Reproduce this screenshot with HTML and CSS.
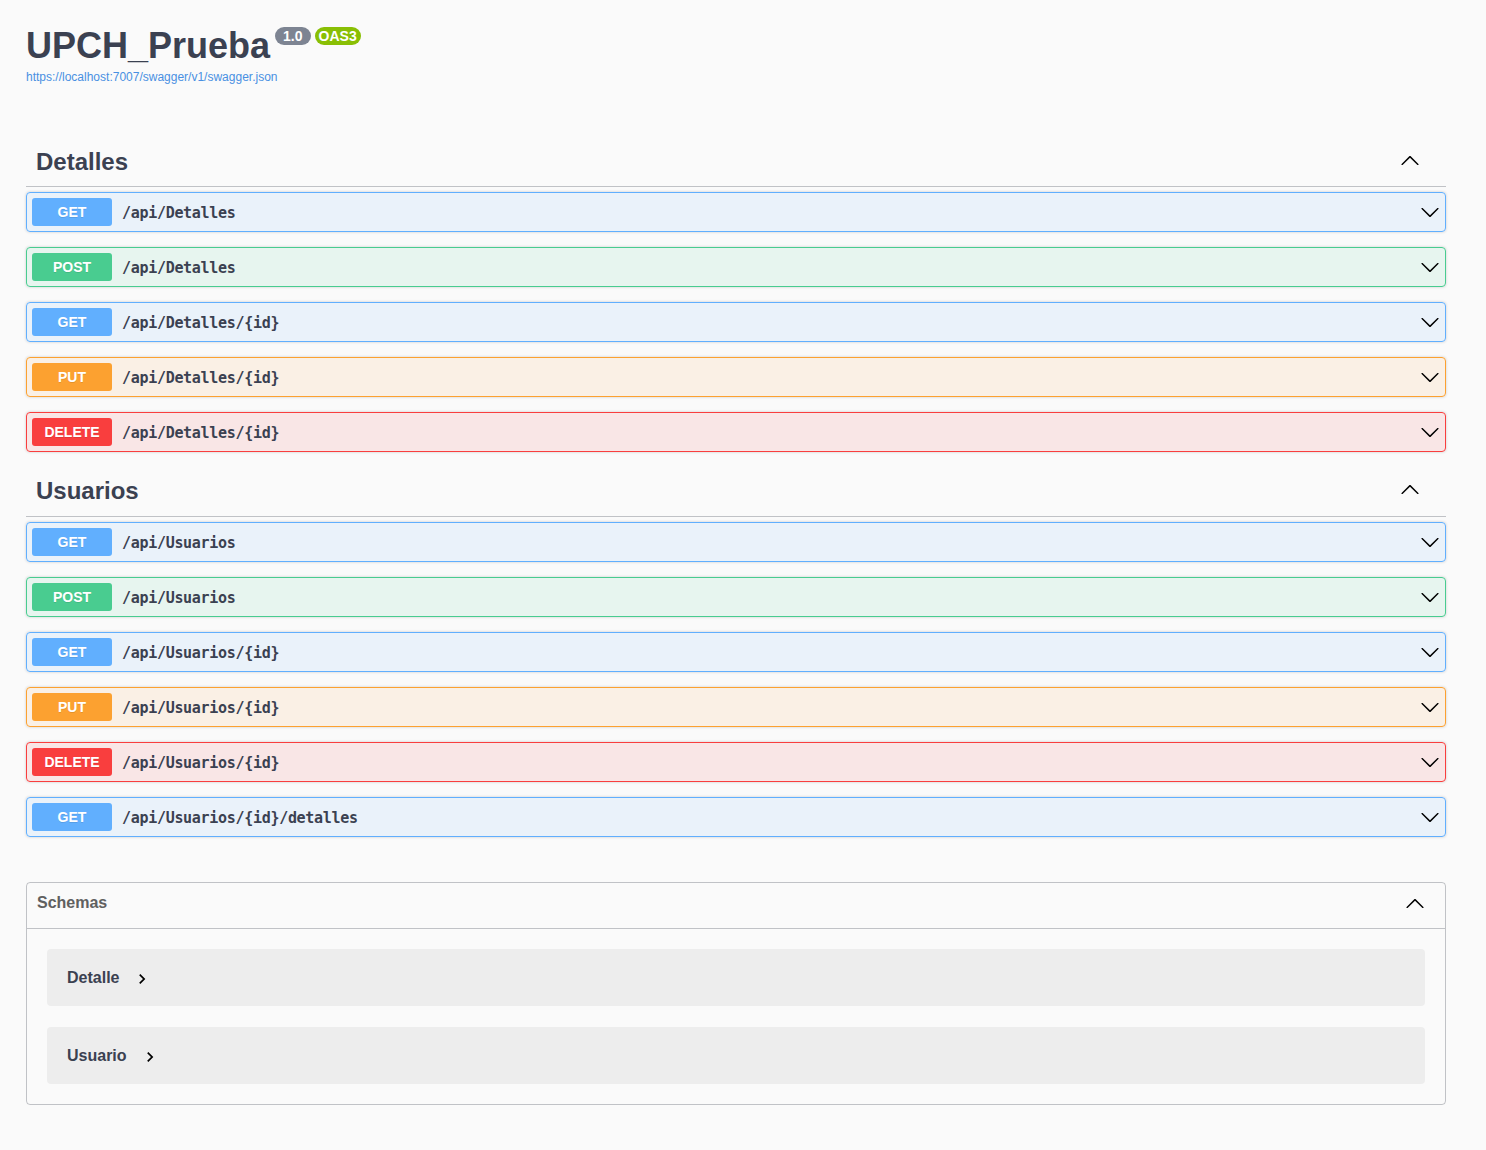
FILE: index.html
```html
<!DOCTYPE html>
<html lang="es">
<head>
<meta charset="utf-8">
<title>UPCH_Prueba</title>
<link rel="stylesheet" href="styles.css">
</head>
<body>
<svg width="0" height="0" class="defs" aria-hidden="true">
  <defs>
    <symbol id="arrow-down" viewBox="0 0 20 20"><path d="M17.418 6.109c.272-.268.709-.268.979 0s.271.701 0 .969l-7.908 7.83c-.27.268-.707.268-.979 0l-7.908-7.83c-.27-.268-.27-.701 0-.969.271-.268.709-.268.979 0L10 13.25l7.418-7.141z"/></symbol>
    <symbol id="arrow-up" viewBox="0 0 20 20"><path d="M17.418 14.908c.272.268.709.268.979 0s.271-.701 0-.969l-7.908-7.83c-.27-.268-.707-.268-.979 0l-7.908 7.830c-.27.268-.27.701 0 .969.271.268.709.268.979 0L10 7.757l7.418 7.151z"/></symbol>
    <symbol id="arrow-right" viewBox="0 0 24 24"><path d="M10 6L8.59 7.41 13.17 12l-4.58 4.59L10 18l6-6z"/></symbol>
  </defs>
</svg>
<div class="wrapper">
  <div class="info">
    <h2 class="title">UPCH_Prueba<span class="badge badge-version">1.0</span><span class="badge badge-oas">OAS3</span></h2>
    <a class="spec-link" href="#">https://localhost:7007/swagger/v1/swagger.json</a>
  </div>

  <section class="tag-section">
    <h3 class="tag-title"><span class="tag-name">Detalles</span><svg class="arrow-lg"><use href="#arrow-up"/></svg></h3>
    <div class="opblock get"><span class="method">GET</span><span class="path">/api/Detalles</span><svg class="arrow"><use href="#arrow-down"/></svg></div>
    <div class="opblock post"><span class="method">POST</span><span class="path">/api/Detalles</span><svg class="arrow"><use href="#arrow-down"/></svg></div>
    <div class="opblock get"><span class="method">GET</span><span class="path">/api/Detalles/{id}</span><svg class="arrow"><use href="#arrow-down"/></svg></div>
    <div class="opblock put"><span class="method">PUT</span><span class="path">/api/Detalles/{id}</span><svg class="arrow"><use href="#arrow-down"/></svg></div>
    <div class="opblock delete"><span class="method">DELETE</span><span class="path">/api/Detalles/{id}</span><svg class="arrow"><use href="#arrow-down"/></svg></div>
  </section>

  <section class="tag-section">
    <h3 class="tag-title"><span class="tag-name">Usuarios</span><svg class="arrow-lg"><use href="#arrow-up"/></svg></h3>
    <div class="opblock get"><span class="method">GET</span><span class="path">/api/Usuarios</span><svg class="arrow"><use href="#arrow-down"/></svg></div>
    <div class="opblock post"><span class="method">POST</span><span class="path">/api/Usuarios</span><svg class="arrow"><use href="#arrow-down"/></svg></div>
    <div class="opblock get"><span class="method">GET</span><span class="path">/api/Usuarios/{id}</span><svg class="arrow"><use href="#arrow-down"/></svg></div>
    <div class="opblock put"><span class="method">PUT</span><span class="path">/api/Usuarios/{id}</span><svg class="arrow"><use href="#arrow-down"/></svg></div>
    <div class="opblock delete"><span class="method">DELETE</span><span class="path">/api/Usuarios/{id}</span><svg class="arrow"><use href="#arrow-down"/></svg></div>
    <div class="opblock get"><span class="method">GET</span><span class="path">/api/Usuarios/{id}/detalles</span><svg class="arrow"><use href="#arrow-down"/></svg></div>
  </section>

  <section class="models">
    <h4 class="models-title"><span class="models-name">Schemas</span><svg class="arrow-lg"><use href="#arrow-up"/></svg></h4>
    <div class="models-body">
      <div class="model"><span class="model-title">Detalle</span><svg class="toggle"><use href="#arrow-right"/></svg></div>
      <div class="model"><span class="model-title">Usuario</span><svg class="toggle"><use href="#arrow-right"/></svg></div>
    </div>
  </section>
</div>
</body>
</html>
```
FILE: styles.css
```css
html, body {
  margin: 0;
  padding: 0;
  background: #fafafa;
}
body {
  font-family: "Liberation Sans", Arial, sans-serif;
  color: #3b4151;
}
.defs {
  position: absolute;
  width: 0;
  height: 0;
}
.wrapper {
  width: 1420px;
  margin-left: 26px;
  padding-bottom: 44px;
}
.info {
  padding-top: 25px;
  margin-bottom: 54px;
}
.title {
  margin: 0;
  font-size: 36px;
  font-weight: 700;
  line-height: 41px;
  color: #3b4151;
  display: flex;
  align-items: flex-start;
}
.badge {
  margin-top: 2px;
  margin-left: 5px;
  font-size: 14px;
  line-height: 14px;
  font-weight: 700;
  color: #fff;
  border-radius: 57px;
}
.badge-version {
  background: #7d8492;
  padding: 2px 8px;
}
.badge-oas {
  background: #89bf04;
  padding: 2px 4px;
  margin-left: 4px;
}
.spec-link {
  display: block;
  margin-top: 4px;
  font-size: 12px;
  line-height: 14px;
  color: #4990e2;
  text-decoration: none;
}
.tag-section {
  display: flex;
  flex-direction: column;
}
.tag-title {
  margin: 0 0 5px;
  padding: 10px 26px 10px 10px;
  border-bottom: 1px solid rgba(59, 65, 81, .3);
  display: flex;
  align-items: center;
  justify-content: space-between;
  font-size: 24px;
  line-height: 28px;
  font-weight: 700;
  color: #3b4151;
}
.tag-section + .tag-section .tag-title {
  padding-top: 10px;
  padding-bottom: 11px;
}
.arrow-lg {
  width: 20px;
  height: 20px;
  fill: #000;
}
.tag-title .arrow-lg {
  margin-bottom: 4px;
}
.opblock {
  display: flex;
  align-items: center;
  padding: 5px;
  margin-bottom: 15px;
  border: 1px solid;
  border-radius: 4px;
  box-shadow: 0 0 3px rgba(0, 0, 0, .19);
}
.method {
  min-width: 80px;
  padding: 6px 0;
  font-size: 14px;
  line-height: 16px;
  font-weight: 700;
  text-align: center;
  color: #fff;
  border-radius: 3px;
  text-shadow: 0 1px 0 rgba(0, 0, 0, .1);
}
.path {
  flex: 1;
  padding: 2px 10px 0;
  font-family: "DejaVu Sans Mono", "Liberation Mono", monospace;
  font-size: 15px;
  letter-spacing: -0.3px;
  font-weight: 700;
  color: #3b4151;
}
.arrow {
  width: 20px;
  height: 20px;
  fill: #000;
}
.get { background: rgba(97, 175, 254, .1); border-color: #61affe; }
.get .method { background: #61affe; }
.post { background: rgba(73, 204, 144, .1); border-color: #49cc90; }
.post .method { background: #49cc90; }
.put { background: rgba(252, 161, 48, .1); border-color: #fca130; }
.put .method { background: #fca130; }
.delete { background: rgba(249, 62, 62, .1); border-color: #f93e3e; }
.delete .method { background: #f93e3e; }

.models {
  margin-top: 30px;
  border: 1px solid rgba(59, 65, 81, .3);
  border-radius: 4px;
}
.models-title {
  margin: 0;
  padding: 10px 20px 10px 10px;
  height: 25px;
  display: flex;
  align-items: flex-start;
  justify-content: space-between;
  font-size: 16px;
  line-height: 18px;
  font-weight: 700;
  color: #606060;
  border-bottom: 1px solid rgba(59, 65, 81, .3);
}
.models-name {
  padding-top: 1px;
}
.models-body {
  padding: 20px;
  display: flex;
  flex-direction: column;
  gap: 21px;
}
.model {
  height: 57px;
  padding: 0 20px;
  display: flex;
  align-items: center;
  background: rgba(0, 0, 0, .05);
  border-radius: 4px;
}
.model-title {
  font-size: 16px;
  font-weight: 700;
  color: #3b4151;
}
.toggle {
  width: 20px;
  height: 20px;
  margin-left: 13px;
  margin-top: 2px;
  fill: #000;
}
```
